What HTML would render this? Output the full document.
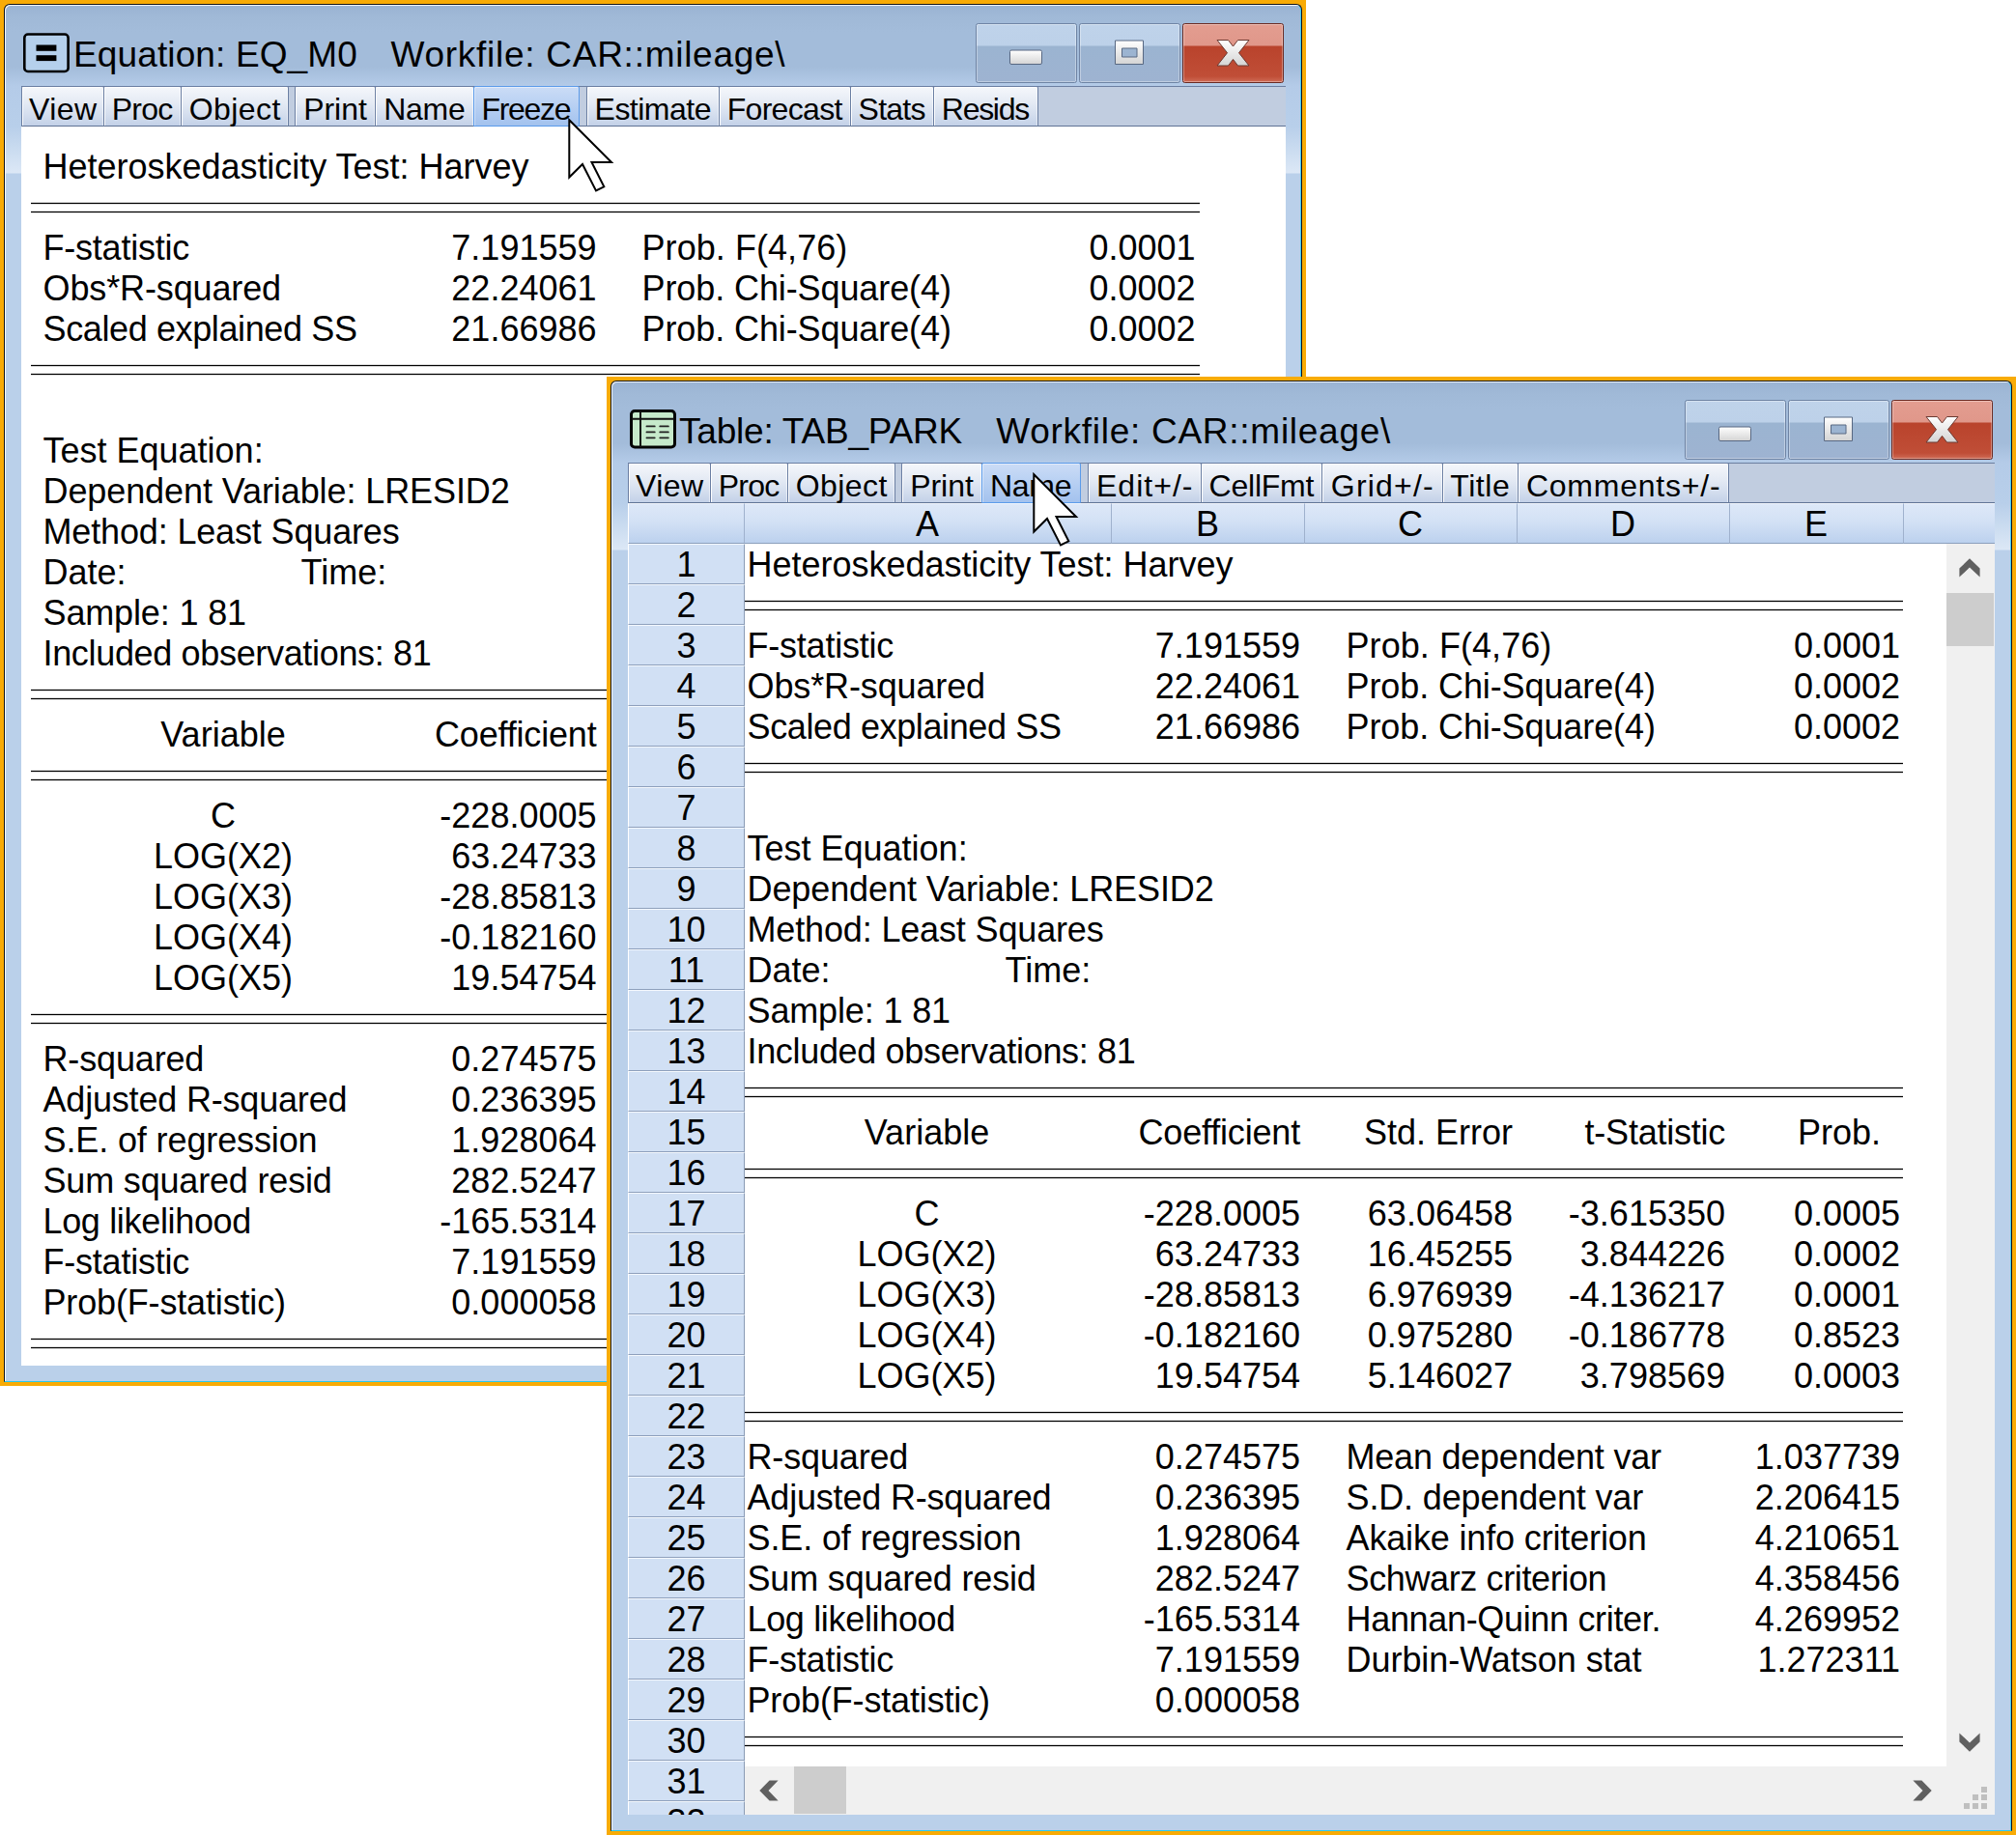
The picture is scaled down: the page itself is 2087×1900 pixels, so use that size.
<!DOCTYPE html>
<html lang="en"><head><meta charset="utf-8"><title>EViews</title>
<style>
*{box-sizing:border-box}
html,body{margin:0;padding:0}
body{width:2087px;height:1900px;background:#fff;position:relative;overflow:hidden;font-family:"Liberation Sans",sans-serif;color:#000}
.win{position:absolute;background:#f8ab06;overflow:hidden}
.fr{position:absolute;left:4px;top:4px;right:4px;bottom:4px;border:1px solid #10141a;border-bottom-color:#2cc8ec;border-radius:6px 6px 0 0;
 background:linear-gradient(to bottom,#9ab3d2 0,#a0b9d7 12px,#a3bcda 28px,#a3bcda 64px,#b4cbe8 84px,#b8cfea 126px,#dce8f6 174px,#bad0ea 175px,#bad0ea 100%);
 box-shadow:inset 1px 1px 0 rgba(255,255,255,.85),inset -1px 0 0 #3fc8f0}
.ttl{position:absolute;left:76px;top:27px;height:60px;line-height:60px;font-size:37px;letter-spacing:.42px;white-space:pre}
.ico{position:absolute;left:23px;top:33px}
.cb{position:absolute;top:24px;height:62px;border:1px solid #6f84a4;border-radius:2.5px;overflow:hidden;
 background:linear-gradient(to bottom,#bfd3ea 0,#bdd1e9 22px,#9bb4d1 23px,#9eb3d1 100%);box-shadow:inset 0 0 0 1px rgba(255,255,255,.35)}
.cb svg{position:absolute;left:-1px;top:-1px}
.cb.cls{border-color:#6b2a22;background:linear-gradient(to bottom,#e39d90 0,#e0978a 22px,#b9432c 23px,#c04e37 54px,#cf6a55 100%)}
.tb{position:absolute;height:42px;background:#c1cde0;border-top:1px solid #6b7fa1;border-bottom:1px solid #5f7395}
.b{position:absolute;top:89px;height:42px;border:1px solid #6a7ea2;border-bottom-color:#5f7395;background:linear-gradient(to bottom,#f5f7fb 0,#e4eaf4 42%,#d4deee 72%,#c3d1e8 100%);
 box-shadow:inset 1px 1px 0 rgba(255,255,255,.95),inset -1px 0 0 rgba(255,255,255,.5);text-align:center;font-size:32px;line-height:46px;white-space:nowrap;border-radius:2px 2px 0 0}
.b.hot{border-color:#5b9bea;background:linear-gradient(to bottom,#cbdcf6 0,#b9d1f3 45%,#a3c2ee 100%);box-shadow:inset 1px 1px 0 rgba(255,255,255,.45)}
.ct{position:absolute;background:#fff;overflow:hidden}
.c{position:absolute;height:42px;line-height:42px;font-size:36px;white-space:pre;padding-top:.5px}
.c.r{text-align:right}
.c.m{text-align:center}
.dl{position:absolute;height:10.200px;border-top:1.300px solid #000;border-bottom:1.300px solid #000}
.dl::before,.dl::after{content:"";position:absolute;left:0;right:0;height:3px;background:rgba(0,0,0,.14)}
.dl::before{top:-2px}
.dl::after{bottom:-2px}
.cur{position:absolute;z-index:50}
.rh{position:absolute;left:0;width:121px;height:42px;background:#d1e0f4;border-bottom:1px solid #8ea0bc;border-top:1px solid #f4f8fd;border-left:1px solid #fff;border-right:1px solid #8a9bb5;text-align:center;font-size:36px;line-height:40px;padding-top:.5px}
.ch{position:absolute;top:0;height:42px;background:linear-gradient(to bottom,#dde8f8 0,#d3e1f5 45%,#bcd1ee 100%);border-right:1px solid #9fb1cd;border-bottom:1px solid #8ca0bd;border-top:1px solid #f2f6fc;text-align:center;font-size:36px;line-height:41px}
.sb{position:absolute;background:#f0f0f0}
.th{position:absolute;background:#cdcdcd}
</style></head>
<body>
<div class="win" style="left:0;top:0;width:1352px;height:1435px"><div class="fr"></div>
<div class="ttl" style="left:76px;letter-spacing:0.125px">Equation: EQ_M0</div>
<div class="ttl" style="left:404.5px;letter-spacing:0.73px">Workfile: CAR::mileage\</div>
<svg class="ico" width="50" height="44" viewBox="0 0 50 44"><rect x="2.300" y="2.550" width="45.300" height="38.450" rx="3.600" fill="#b5d0ec" stroke="#000" stroke-width="2.600"/><rect x="14.500" y="13.500" width="20.900" height="6.300" fill="#000"/><rect x="14.500" y="24.200" width="20.900" height="5.900" fill="#000"/></svg>
<div class="cb min" style="left:1010px;width:105px"><i></i><svg width="104" height="61" viewBox="0 0 104 61"><defs><linearGradient id="gw" x1="0" y1="0" x2="0" y2="1"><stop offset="0" stop-color="#fff"/><stop offset="1" stop-color="#d4d4d4"/></linearGradient></defs><rect x="35.5" y="28" width="33" height="14.5" rx="1.5" fill="url(#gw)" stroke="#586882" stroke-width="1"/></svg></div>
<div class="cb max" style="left:1117px;width:105px"><i></i><svg width="104" height="61" viewBox="0 0 104 61"><path fill-rule="evenodd" d="M37.5 18h29v24.5h-29z M44.5 26h15.5v9h-15.5z" fill="url(#gw)" stroke="#586882" stroke-width="1"/></svg></div>
<div class="cb cls" style="left:1224px;width:105px"><i></i><svg width="105" height="61" viewBox="0 0 105 61"><path d="M36 17.500h11.500l5 6.500 5-6.500h11.500l-10.500 13.200 10.500 13.300h-11.500l-5-6.600-5 6.600h-11.500l10.500-13.300z" fill="url(#gw)" stroke="#6b3a32" stroke-width="1" stroke-linejoin="round"/></svg></div>
<div class="tb" style="left:22px;top:89px;width:1309px"></div>
<div class="b" style="left:22px;width:86px;letter-spacing:0.43px;text-indent:0.43px">View</div>
<div class="b" style="left:107px;width:81px;letter-spacing:-0.75px;text-indent:-0.75px">Proc</div>
<div class="b" style="left:187px;width:112px;letter-spacing:0.44px;text-indent:0.44px">Object</div>
<div class="b" style="left:305px;width:84px;letter-spacing:-0.06px;text-indent:-0.06px">Print</div>
<div class="b" style="left:388px;width:103px;letter-spacing:-0.24px;text-indent:-0.24px">Name</div>
<div class="b hot" style="left:490px;width:110px;letter-spacing:-1.33px;text-indent:-1.33px">Freeze</div>
<div class="b" style="left:607px;width:138px;letter-spacing:-0.51px;text-indent:-0.51px">Estimate</div>
<div class="b" style="left:744px;width:137px;letter-spacing:-0.69px;text-indent:-0.69px">Forecast</div>
<div class="b" style="left:880px;width:87px;letter-spacing:-0.78px;text-indent:-0.78px">Stats</div>
<div class="b" style="left:966px;width:109px;letter-spacing:-1.29px;text-indent:-1.29px">Resids</div>
<div class="ct" style="left:22px;top:131px;width:1309px;height:1283px">
<div class="c" style="left:22.5px;top:20px"><span style="letter-spacing:-0.020px">Heteroskedasticity Test: Harvey</span></div>
<div class="dl" style="left:10px;top:78.85px;width:1210px"></div>
<div class="c" style="left:22.5px;top:104px"><span style="letter-spacing:-0.220px">F-statistic</span></div>
<div class="c r" style="left:398.5px;width:197.0px;top:104px">7.191559</div>
<div class="c" style="left:602.5px;top:104px">    <span style="letter-spacing:0.062px">Prob. F(4,76)</span></div>
<div class="c r" style="left:1038.5px;width:177.0px;top:104px">0.0001</div>
<div class="c" style="left:22.5px;top:146px"><span style="letter-spacing:-0.125px">Obs*R-squared</span></div>
<div class="c r" style="left:398.5px;width:197.0px;top:146px">22.24061</div>
<div class="c" style="left:602.5px;top:146px">    <span style="letter-spacing:-0.097px">Prob. Chi-Square(4)</span></div>
<div class="c r" style="left:1038.5px;width:177.0px;top:146px">0.0002</div>
<div class="c" style="left:22.5px;top:188px"><span style="letter-spacing:-0.378px">Scaled explained SS</span></div>
<div class="c r" style="left:398.5px;width:197.0px;top:188px">21.66986</div>
<div class="c" style="left:602.5px;top:188px">    <span style="letter-spacing:-0.097px">Prob. Chi-Square(4)</span></div>
<div class="c r" style="left:1038.5px;width:177.0px;top:188px">0.0002</div>
<div class="dl" style="left:10px;top:246.85px;width:1210px"></div>
<div class="c" style="left:22.5px;top:314px">Test Equation:</div>
<div class="c" style="left:22.5px;top:356px"><span style="letter-spacing:-0.092px">Dependent Variable: LRESID2</span></div>
<div class="c" style="left:22.5px;top:398px"><span style="letter-spacing:-0.150px">Method: Least Squares</span></div>
<div class="c" style="left:22.5px;top:440px">Date:</div>
<div class="c" style="left:289.5px;top:440px">Time:</div>
<div class="c" style="left:22.5px;top:482px"><span style="letter-spacing:-0.136px">Sample: 1 81</span></div>
<div class="c" style="left:22.5px;top:524px"><span style="letter-spacing:-0.333px">Included observations: 81</span></div>
<div class="dl" style="left:10px;top:582.85px;width:1210px"></div>
<div class="c m" style="left:19.0px;width:380.0px;top:608px">Variable</div>
<div class="c r" style="left:398.5px;width:197.0px;top:608px"><span style="letter-spacing:-0.180px">Coefficient</span></div>
<div class="c r" style="left:598.5px;width:217.0px;top:608px">Std. Error</div>
<div class="c r" style="left:818.5px;width:217.0px;top:608px"><span style="letter-spacing:-0.240px">t-Statistic</span></div>
<div class="c r" style="left:1038.5px;width:177.0px;top:608px">Prob.  </div>
<div class="dl" style="left:10px;top:666.85px;width:1210px"></div>
<div class="c m" style="left:19.0px;width:380.0px;top:692px">C</div>
<div class="c r" style="left:398.5px;width:197.0px;top:692px">-228.0005</div>
<div class="c r" style="left:598.5px;width:217.0px;top:692px">63.06458</div>
<div class="c r" style="left:818.5px;width:217.0px;top:692px">-3.615350</div>
<div class="c r" style="left:1038.5px;width:177.0px;top:692px">0.0005</div>
<div class="c m" style="left:19.0px;width:380.0px;top:734px">LOG(X2)</div>
<div class="c r" style="left:398.5px;width:197.0px;top:734px">63.24733</div>
<div class="c r" style="left:598.5px;width:217.0px;top:734px">16.45255</div>
<div class="c r" style="left:818.5px;width:217.0px;top:734px">3.844226</div>
<div class="c r" style="left:1038.5px;width:177.0px;top:734px">0.0002</div>
<div class="c m" style="left:19.0px;width:380.0px;top:776px">LOG(X3)</div>
<div class="c r" style="left:398.5px;width:197.0px;top:776px">-28.85813</div>
<div class="c r" style="left:598.5px;width:217.0px;top:776px">6.976939</div>
<div class="c r" style="left:818.5px;width:217.0px;top:776px">-4.136217</div>
<div class="c r" style="left:1038.5px;width:177.0px;top:776px">0.0001</div>
<div class="c m" style="left:19.0px;width:380.0px;top:818px">LOG(X4)</div>
<div class="c r" style="left:398.5px;width:197.0px;top:818px">-0.182160</div>
<div class="c r" style="left:598.5px;width:217.0px;top:818px">0.975280</div>
<div class="c r" style="left:818.5px;width:217.0px;top:818px">-0.186778</div>
<div class="c r" style="left:1038.5px;width:177.0px;top:818px">0.8523</div>
<div class="c m" style="left:19.0px;width:380.0px;top:860px">LOG(X5)</div>
<div class="c r" style="left:398.5px;width:197.0px;top:860px">19.54754</div>
<div class="c r" style="left:598.5px;width:217.0px;top:860px">5.146027</div>
<div class="c r" style="left:818.5px;width:217.0px;top:860px">3.798569</div>
<div class="c r" style="left:1038.5px;width:177.0px;top:860px">0.0003</div>
<div class="dl" style="left:10px;top:918.85px;width:1210px"></div>
<div class="c" style="left:22.5px;top:944px"><span style="letter-spacing:-0.150px">R-squared</span></div>
<div class="c r" style="left:398.5px;width:197.0px;top:944px">0.274575</div>
<div class="c" style="left:602.5px;top:944px">    <span style="letter-spacing:-0.221px">Mean dependent var</span></div>
<div class="c r" style="left:1038.5px;width:177.0px;top:944px">1.037739</div>
<div class="c" style="left:22.5px;top:986px"><span style="letter-spacing:-0.188px">Adjusted R-squared</span></div>
<div class="c r" style="left:398.5px;width:197.0px;top:986px">0.236395</div>
<div class="c" style="left:602.5px;top:986px">    <span style="letter-spacing:-0.147px">S.D. dependent var</span></div>
<div class="c r" style="left:1038.5px;width:177.0px;top:986px">2.206415</div>
<div class="c" style="left:22.5px;top:1028px"><span style="letter-spacing:-0.118px">S.E. of regression</span></div>
<div class="c r" style="left:398.5px;width:197.0px;top:1028px">1.928064</div>
<div class="c" style="left:602.5px;top:1028px">    <span style="letter-spacing:-0.150px">Akaike info criterion</span></div>
<div class="c r" style="left:1038.5px;width:177.0px;top:1028px">4.210651</div>
<div class="c" style="left:22.5px;top:1070px"><span style="letter-spacing:-0.175px">Sum squared resid</span></div>
<div class="c r" style="left:398.5px;width:197.0px;top:1070px">282.5247</div>
<div class="c" style="left:602.5px;top:1070px">    <span style="letter-spacing:-0.375px">Schwarz criterion</span></div>
<div class="c r" style="left:1038.5px;width:177.0px;top:1070px">4.358456</div>
<div class="c" style="left:22.5px;top:1112px"><span style="letter-spacing:-0.338px">Log likelihood</span></div>
<div class="c r" style="left:398.5px;width:197.0px;top:1112px">-165.5314</div>
<div class="c" style="left:602.5px;top:1112px">    <span style="letter-spacing:-0.329px">Hannan-Quinn criter.</span></div>
<div class="c r" style="left:1038.5px;width:177.0px;top:1112px">4.269952</div>
<div class="c" style="left:22.5px;top:1154px"><span style="letter-spacing:-0.220px">F-statistic</span></div>
<div class="c r" style="left:398.5px;width:197.0px;top:1154px">7.191559</div>
<div class="c" style="left:602.5px;top:1154px">    <span style="letter-spacing:-0.044px">Durbin-Watson stat</span></div>
<div class="c r" style="left:1038.5px;width:177.0px;top:1154px">1.272311</div>
<div class="c" style="left:22.5px;top:1196px"><span style="letter-spacing:-0.156px">Prob(F-statistic)</span></div>
<div class="c r" style="left:398.5px;width:197.0px;top:1196px">0.000058</div>
<div class="dl" style="left:10px;top:1254.85px;width:1210px"></div>
</div>
</div>
<div class="win" style="left:628px;top:390px;width:1459px;height:1510px"><div class="fr"></div>
<div class="ttl" style="left:75px;letter-spacing:-0.21px">Table: TAB_PARK</div>
<div class="ttl" style="left:403.2px;letter-spacing:0.73px">Workfile: CAR::mileage\</div>
<svg class="ico" width="50" height="44" viewBox="0 0 50 44"><rect x="2.500" y="2.400" width="45" height="37.700" rx="3.600" fill="#c6eacb" stroke="#000" stroke-width="3"/><path d="M12 3v37M3 10.650h44" stroke="#111" stroke-width="2" fill="none"/><path d="M18.400 18.400h8.400M32.200 18.400h8.700M18.400 24.400h8.400M32.200 24.400h8.700M18.400 30.300h8.400M32.200 30.300h8.700" stroke="#222" stroke-width="1.700" stroke-linecap="round"/></svg>
<div class="cb min" style="left:1116px;width:105px"><i></i><svg width="104" height="61" viewBox="0 0 104 61"><defs><linearGradient id="gw" x1="0" y1="0" x2="0" y2="1"><stop offset="0" stop-color="#fff"/><stop offset="1" stop-color="#d4d4d4"/></linearGradient></defs><rect x="35.5" y="28" width="33" height="14.5" rx="1.5" fill="url(#gw)" stroke="#586882" stroke-width="1"/></svg></div>
<div class="cb max" style="left:1223px;width:105px"><i></i><svg width="104" height="61" viewBox="0 0 104 61"><path fill-rule="evenodd" d="M37.5 18h29v24.5h-29z M44.5 26h15.5v9h-15.5z" fill="url(#gw)" stroke="#586882" stroke-width="1"/></svg></div>
<div class="cb cls" style="left:1330px;width:105px"><i></i><svg width="105" height="61" viewBox="0 0 105 61"><path d="M36 17.500h11.500l5 6.500 5-6.500h11.500l-10.500 13.200 10.500 13.300h-11.500l-5-6.600-5 6.600h-11.500l10.500-13.300z" fill="url(#gw)" stroke="#6b3a32" stroke-width="1" stroke-linejoin="round"/></svg></div>
<div class="tb" style="left:22px;top:89px;width:1415px"></div>
<div class="b" style="left:22px;width:86px;letter-spacing:0.43px;text-indent:0.43px">View</div>
<div class="b" style="left:107px;width:81px;letter-spacing:-0.75px;text-indent:-0.75px">Proc</div>
<div class="b" style="left:187px;width:112px;letter-spacing:0.44px;text-indent:0.44px">Object</div>
<div class="b" style="left:305px;width:84px;letter-spacing:-0.06px;text-indent:-0.06px">Print</div>
<div class="b hot" style="left:388px;width:102.5px;letter-spacing:-0.24px;text-indent:-0.24px">Name</div>
<div class="b" style="left:497.5px;width:118.5px;letter-spacing:1.02px;text-indent:1.02px">Edit+/-</div>
<div class="b" style="left:615px;width:126px;letter-spacing:-0.23px;text-indent:-0.23px">CellFmt</div>
<div class="b" style="left:740px;width:125.5px;letter-spacing:1.20px;text-indent:1.20px">Grid+/-</div>
<div class="b" style="left:864.5px;width:79.0px;letter-spacing:0.55px;text-indent:0.55px">Title</div>
<div class="b" style="left:942.5px;width:219.5px;letter-spacing:0.77px;text-indent:0.77px">Comments+/-</div>
<div class="ct" style="left:22px;top:131px;width:1415px;height:1358px">
<div class="ch" style="left:0;width:121px;border-left:1px solid #fff"></div>
<div class="ch" style="left:120.5px;width:380px">A</div>
<div class="ch" style="left:500.5px;width:200px">B</div>
<div class="ch" style="left:700.5px;width:220px">C</div>
<div class="ch" style="left:920.5px;width:220px">D</div>
<div class="ch" style="left:1140.5px;width:180px">E</div>
<div class="ch" style="left:1320.5px;width:94.5px;border-right:0"></div>
<div class="rh" style="top:42px">1</div>
<div class="rh" style="top:84px">2</div>
<div class="rh" style="top:126px">3</div>
<div class="rh" style="top:168px">4</div>
<div class="rh" style="top:210px">5</div>
<div class="rh" style="top:252px">6</div>
<div class="rh" style="top:294px">7</div>
<div class="rh" style="top:336px">8</div>
<div class="rh" style="top:378px">9</div>
<div class="rh" style="top:420px">10</div>
<div class="rh" style="top:462px">11</div>
<div class="rh" style="top:504px">12</div>
<div class="rh" style="top:546px">13</div>
<div class="rh" style="top:588px">14</div>
<div class="rh" style="top:630px">15</div>
<div class="rh" style="top:672px">16</div>
<div class="rh" style="top:714px">17</div>
<div class="rh" style="top:756px">18</div>
<div class="rh" style="top:798px">19</div>
<div class="rh" style="top:840px">20</div>
<div class="rh" style="top:882px">21</div>
<div class="rh" style="top:924px">22</div>
<div class="rh" style="top:966px">23</div>
<div class="rh" style="top:1008px">24</div>
<div class="rh" style="top:1050px">25</div>
<div class="rh" style="top:1092px">26</div>
<div class="rh" style="top:1134px">27</div>
<div class="rh" style="top:1176px">28</div>
<div class="rh" style="top:1218px">29</div>
<div class="rh" style="top:1260px">30</div>
<div class="rh" style="top:1302px">31</div>
<div class="rh" style="top:1344px">32</div>
<div class="c" style="left:123.5px;top:42.5px"><span style="letter-spacing:-0.020px">Heteroskedasticity Test: Harvey</span></div>
<div class="dl" style="left:121px;top:100.6px;width:1199px"></div>
<div class="c" style="left:123.5px;top:126.5px"><span style="letter-spacing:-0.220px">F-statistic</span></div>
<div class="c r" style="left:501.0px;width:195.0px;top:126.5px">7.191559</div>
<div class="c" style="left:703.5px;top:126.5px">    <span style="letter-spacing:0.062px">Prob. F(4,76)</span></div>
<div class="c r" style="left:1141.0px;width:176.0px;top:126.5px">0.0001</div>
<div class="c" style="left:123.5px;top:168.5px"><span style="letter-spacing:-0.125px">Obs*R-squared</span></div>
<div class="c r" style="left:501.0px;width:195.0px;top:168.5px">22.24061</div>
<div class="c" style="left:703.5px;top:168.5px">    <span style="letter-spacing:-0.097px">Prob. Chi-Square(4)</span></div>
<div class="c r" style="left:1141.0px;width:176.0px;top:168.5px">0.0002</div>
<div class="c" style="left:123.5px;top:210.5px"><span style="letter-spacing:-0.378px">Scaled explained SS</span></div>
<div class="c r" style="left:501.0px;width:195.0px;top:210.5px">21.66986</div>
<div class="c" style="left:703.5px;top:210.5px">    <span style="letter-spacing:-0.097px">Prob. Chi-Square(4)</span></div>
<div class="c r" style="left:1141.0px;width:176.0px;top:210.5px">0.0002</div>
<div class="dl" style="left:121px;top:268.6px;width:1199px"></div>
<div class="c" style="left:123.5px;top:336.5px">Test Equation:</div>
<div class="c" style="left:123.5px;top:378.5px"><span style="letter-spacing:-0.092px">Dependent Variable: LRESID2</span></div>
<div class="c" style="left:123.5px;top:420.5px"><span style="letter-spacing:-0.150px">Method: Least Squares</span></div>
<div class="c" style="left:123.5px;top:462.5px">Date:</div>
<div class="c" style="left:390.5px;top:462.5px">Time:</div>
<div class="c" style="left:123.5px;top:504.5px"><span style="letter-spacing:-0.136px">Sample: 1 81</span></div>
<div class="c" style="left:123.5px;top:546.5px"><span style="letter-spacing:-0.333px">Included observations: 81</span></div>
<div class="dl" style="left:121px;top:604.6px;width:1199px"></div>
<div class="c m" style="left:119.5px;width:380.0px;top:630.5px">Variable</div>
<div class="c r" style="left:501.0px;width:195.0px;top:630.5px"><span style="letter-spacing:-0.180px">Coefficient</span></div>
<div class="c r" style="left:701.0px;width:215.0px;top:630.5px">Std. Error</div>
<div class="c r" style="left:921.0px;width:215.0px;top:630.5px"><span style="letter-spacing:-0.240px">t-Statistic</span></div>
<div class="c r" style="left:1141.0px;width:176.0px;top:630.5px">Prob.  </div>
<div class="dl" style="left:121px;top:688.6px;width:1199px"></div>
<div class="c m" style="left:119.5px;width:380.0px;top:714.5px">C</div>
<div class="c r" style="left:501.0px;width:195.0px;top:714.5px">-228.0005</div>
<div class="c r" style="left:701.0px;width:215.0px;top:714.5px">63.06458</div>
<div class="c r" style="left:921.0px;width:215.0px;top:714.5px">-3.615350</div>
<div class="c r" style="left:1141.0px;width:176.0px;top:714.5px">0.0005</div>
<div class="c m" style="left:119.5px;width:380.0px;top:756.5px">LOG(X2)</div>
<div class="c r" style="left:501.0px;width:195.0px;top:756.5px">63.24733</div>
<div class="c r" style="left:701.0px;width:215.0px;top:756.5px">16.45255</div>
<div class="c r" style="left:921.0px;width:215.0px;top:756.5px">3.844226</div>
<div class="c r" style="left:1141.0px;width:176.0px;top:756.5px">0.0002</div>
<div class="c m" style="left:119.5px;width:380.0px;top:798.5px">LOG(X3)</div>
<div class="c r" style="left:501.0px;width:195.0px;top:798.5px">-28.85813</div>
<div class="c r" style="left:701.0px;width:215.0px;top:798.5px">6.976939</div>
<div class="c r" style="left:921.0px;width:215.0px;top:798.5px">-4.136217</div>
<div class="c r" style="left:1141.0px;width:176.0px;top:798.5px">0.0001</div>
<div class="c m" style="left:119.5px;width:380.0px;top:840.5px">LOG(X4)</div>
<div class="c r" style="left:501.0px;width:195.0px;top:840.5px">-0.182160</div>
<div class="c r" style="left:701.0px;width:215.0px;top:840.5px">0.975280</div>
<div class="c r" style="left:921.0px;width:215.0px;top:840.5px">-0.186778</div>
<div class="c r" style="left:1141.0px;width:176.0px;top:840.5px">0.8523</div>
<div class="c m" style="left:119.5px;width:380.0px;top:882.5px">LOG(X5)</div>
<div class="c r" style="left:501.0px;width:195.0px;top:882.5px">19.54754</div>
<div class="c r" style="left:701.0px;width:215.0px;top:882.5px">5.146027</div>
<div class="c r" style="left:921.0px;width:215.0px;top:882.5px">3.798569</div>
<div class="c r" style="left:1141.0px;width:176.0px;top:882.5px">0.0003</div>
<div class="dl" style="left:121px;top:940.6px;width:1199px"></div>
<div class="c" style="left:123.5px;top:966.5px"><span style="letter-spacing:-0.150px">R-squared</span></div>
<div class="c r" style="left:501.0px;width:195.0px;top:966.5px">0.274575</div>
<div class="c" style="left:703.5px;top:966.5px">    <span style="letter-spacing:-0.221px">Mean dependent var</span></div>
<div class="c r" style="left:1141.0px;width:176.0px;top:966.5px">1.037739</div>
<div class="c" style="left:123.5px;top:1008.5px"><span style="letter-spacing:-0.188px">Adjusted R-squared</span></div>
<div class="c r" style="left:501.0px;width:195.0px;top:1008.5px">0.236395</div>
<div class="c" style="left:703.5px;top:1008.5px">    <span style="letter-spacing:-0.147px">S.D. dependent var</span></div>
<div class="c r" style="left:1141.0px;width:176.0px;top:1008.5px">2.206415</div>
<div class="c" style="left:123.5px;top:1050.5px"><span style="letter-spacing:-0.118px">S.E. of regression</span></div>
<div class="c r" style="left:501.0px;width:195.0px;top:1050.5px">1.928064</div>
<div class="c" style="left:703.5px;top:1050.5px">    <span style="letter-spacing:-0.150px">Akaike info criterion</span></div>
<div class="c r" style="left:1141.0px;width:176.0px;top:1050.5px">4.210651</div>
<div class="c" style="left:123.5px;top:1092.5px"><span style="letter-spacing:-0.175px">Sum squared resid</span></div>
<div class="c r" style="left:501.0px;width:195.0px;top:1092.5px">282.5247</div>
<div class="c" style="left:703.5px;top:1092.5px">    <span style="letter-spacing:-0.375px">Schwarz criterion</span></div>
<div class="c r" style="left:1141.0px;width:176.0px;top:1092.5px">4.358456</div>
<div class="c" style="left:123.5px;top:1134.5px"><span style="letter-spacing:-0.338px">Log likelihood</span></div>
<div class="c r" style="left:501.0px;width:195.0px;top:1134.5px">-165.5314</div>
<div class="c" style="left:703.5px;top:1134.5px">    <span style="letter-spacing:-0.329px">Hannan-Quinn criter.</span></div>
<div class="c r" style="left:1141.0px;width:176.0px;top:1134.5px">4.269952</div>
<div class="c" style="left:123.5px;top:1176.5px"><span style="letter-spacing:-0.220px">F-statistic</span></div>
<div class="c r" style="left:501.0px;width:195.0px;top:1176.5px">7.191559</div>
<div class="c" style="left:703.5px;top:1176.5px">    <span style="letter-spacing:-0.044px">Durbin-Watson stat</span></div>
<div class="c r" style="left:1141.0px;width:176.0px;top:1176.5px">1.272311</div>
<div class="c" style="left:123.5px;top:1218.5px"><span style="letter-spacing:-0.156px">Prob(F-statistic)</span></div>
<div class="c r" style="left:501.0px;width:195.0px;top:1218.5px">0.000058</div>
<div class="dl" style="left:121px;top:1276.6px;width:1199px"></div>
<div class="sb" style="left:1365px;top:42px;width:50px;height:1316px"></div>
<div class="sb" style="left:121px;top:1308px;width:1294px;height:50px"></div>
<div class="th" style="left:1365px;top:93px;width:49px;height:55px"></div>
<div class="th" style="left:172px;top:1308px;width:54px;height:49px"></div>
<svg style="position:absolute;left:1374px;top:51.60000000000002px" width="30" height="30" viewBox="-15 -15 30 30"><path transform="rotate(0)" d="M0-9.700L10.600 .600V9.600L0-.500-10.600 9.600V.600z" fill="#606060"/></svg>
<svg style="position:absolute;left:1374px;top:1267.5px" width="30" height="30" viewBox="-15 -15 30 30"><path transform="rotate(180)" d="M0-9.700L10.600 .600V9.600L0-.500-10.600 9.600V.600z" fill="#606060"/></svg>
<svg style="position:absolute;left:130.5px;top:1317.5px" width="30" height="30" viewBox="-15 -15 30 30"><path transform="rotate(-90)" d="M0-9.700L10.600 .600V9.600L0-.500-10.600 9.600V.600z" fill="#606060"/></svg>
<svg style="position:absolute;left:1324.5px;top:1317.5px" width="30" height="30" viewBox="-15 -15 30 30"><path transform="rotate(90)" d="M0-9.700L10.600 .600V9.600L0-.500-10.600 9.600V.600z" fill="#606060"/></svg>
<div style="position:absolute;left:1401px;top:1328.5px;width:6px;height:6px;background:#bfbfbf"></div>
<div style="position:absolute;left:1392px;top:1337.0px;width:6px;height:6px;background:#bfbfbf"></div>
<div style="position:absolute;left:1401px;top:1337.0px;width:6px;height:6px;background:#bfbfbf"></div>
<div style="position:absolute;left:1383px;top:1345.5px;width:6px;height:6px;background:#bfbfbf"></div>
<div style="position:absolute;left:1392px;top:1345.5px;width:6px;height:6px;background:#bfbfbf"></div>
<div style="position:absolute;left:1401px;top:1345.5px;width:6px;height:6px;background:#bfbfbf"></div>
</div>
</div>
<svg class="cur" style="left:586.9px;top:120.8px" width="50" height="80" viewBox="0 0 50 80"><path d="M2.300 3.200V62.500L16 49l14 27.500 8.300-4.200L25.500 47h20.500z" fill="#fff" stroke="#000" stroke-width="2" stroke-linejoin="miter"/></svg>
<svg class="cur" style="left:1067.8px;top:488px" width="50" height="80" viewBox="0 0 50 80"><path d="M2.300 3.200V62.500L16 49l14 27.500 8.300-4.200L25.500 47h20.500z" fill="#fff" stroke="#000" stroke-width="2" stroke-linejoin="miter"/></svg>
</body></html>
